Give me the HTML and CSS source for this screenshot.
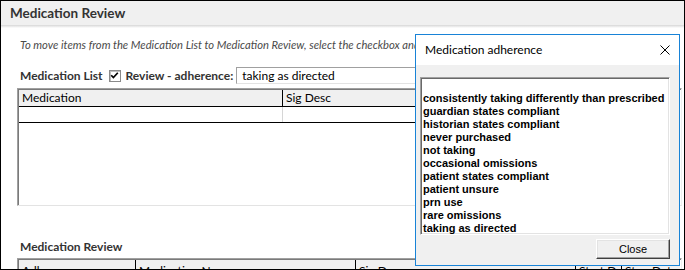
FILE: index.html
```html
<!DOCTYPE html>
<html lang="en">
<head>
<meta charset="utf-8">
<title>Medication Review</title>
<link rel="stylesheet" href="styles.css">
</head>
<body>
<div class="window">
  <header class="titlebar">
    <h1 class="title">Medication Review</h1>
  </header>
  <div class="title-shadow"></div>
  <main class="content">
    <p class="hint">To move items from the Medication List to Medication Review, select the checkbox and click the arrow to add them to the review list.</p>
    <div class="toolbar">
      <span class="label">Medication List</span>
      <span class="checkbox">
        <svg width="9" height="9" viewBox="0 0 9 9"><polyline points="1.2,4.2 3.4,6.6 7.8,1.8" fill="none" stroke="#000" stroke-width="1.7"/></svg>
      </span>
      <span class="label">Review - adherence:</span>
      <div class="input">taking as directed</div>
    </div>
    <div class="grid grid-top">
      <div class="grid-head">
        <div class="cell col-med">Medication</div>
        <div class="cell col-sig">Sig Desc</div>
        <div class="cell col-date">Start Date</div>
        <div class="cell col-date">Stop Date</div>
      </div>
      <div class="grid-row">
        <div class="cell col-med"></div>
        <div class="cell col-sig"></div>
        <div class="cell col-date"></div>
        <div class="cell col-date"></div>
      </div>
    </div>
    <h2 class="section">Medication Review</h2>
    <div class="grid grid-bottom">
      <div class="grid-head head-tall">
        <div class="cell col-adh">Adherence</div>
        <div class="cell col-name">Medication Name</div>
        <div class="cell col-sig2">Sig Desc</div>
        <div class="cell col-start">Start Date</div>
        <div class="cell col-stop">Stop Date</div>
      </div>
    </div>
  </main>

  <div class="dialog">
    <div class="dialog-title">
      <span class="dialog-caption">Medication adherence</span>
      <svg class="dialog-close" width="10" height="10" viewBox="0 0 10 10"><path d="M0.5 0.5 L9.5 9.5 M9.5 0.5 L0.5 9.5" stroke="#000" stroke-width="1" fill="none"/></svg>
    </div>
    <div class="dialog-body">
      <ul class="listbox">
        <li class="item"></li>
        <li class="item">consistently taking differently than prescribed</li>
        <li class="item">guardian states compliant</li>
        <li class="item">historian states compliant</li>
        <li class="item">never purchased</li>
        <li class="item">not taking</li>
        <li class="item">occasional omissions</li>
        <li class="item">patient states compliant</li>
        <li class="item">patient unsure</li>
        <li class="item">prn use</li>
        <li class="item">rare omissions</li>
        <li class="item">taking as directed</li>
      </ul>
      <div class="dialog-actions">
        <button class="button" type="button">Close</button>
      </div>
    </div>
  </div>
</div>
</body>
</html>
```

FILE: styles.css
```css
* { box-sizing: border-box; }

html, body {
  margin: 0;
  padding: 0;
  background: #fff;
}

.window {
  position: relative;
  width: 685px;
  height: 270px;
  border: 1px solid #000;
  background: #fff;
  overflow: hidden;
  font-family: Lato, "Open Sans", sans-serif;
  color: #333;
}

.titlebar {
  height: 24px;
  background: #f0f0f0;
  padding-left: 9px;
  display: flex;
  align-items: center;
}

.title {
  margin: 0;
  font-size: 13.5px;
  font-weight: 700;
  color: #333;
  line-height: 24px;
}

.title-shadow {
  height: 3px;
  background: linear-gradient(#d6d6d6, #fff);
}

.content {
  padding: 0 2px 0 16px;
}

.hint {
  margin: 10px 0 0 3px;
  font-size: 11.2px;
  font-style: italic;
  line-height: 14px;
  color: #4a4a4a;
  white-space: nowrap;
  overflow: hidden;
}

.toolbar {
  margin-top: 15px;
  height: 17px;
  display: flex;
  align-items: center;
}

.label {
  font-size: 12px;
  font-weight: 700;
  color: #333;
  white-space: nowrap;
}

.toolbar .label:first-child {
  margin-left: 3px;
}

.checkbox {
  width: 12px;
  height: 12px;
  margin: 0 5px 0 6px;
  background: #fff;
  border: 1px solid #8a8a8a;
  box-shadow: inset 1px 1px #bdbdbd;
  display: flex;
  align-items: center;
  justify-content: center;
}

.input {
  flex: 0 0 440px;
  height: 17px;
  margin-left: 3px;
  padding-left: 5px;
  border: 1px solid;
  border-color: #a0a0a0 #e3e3e3 #e3e3e3 #a0a0a0;
  font-size: 12px;
  line-height: 15px;
  color: #000;
  white-space: nowrap;
}

.grid {
  border: 1px solid;
  border-color: #a0a0a0 #f0f0f0 #e3e3e3 #a0a0a0;
  box-shadow: inset 1px 1px #7a7a7a, inset -1px -1px #fff;
  padding: 1px;
  overflow: hidden;
}

.grid-top {
  margin-top: 4px;
  height: 118px;
}

.grid-head,
.grid-row {
  display: flex;
  white-space: nowrap;
}

.grid-head {
  height: 17px;
  background: #f0f0f0;
  border-bottom: 1px solid #000;
}

.grid-row {
  height: 16px;
  border-bottom: 1px solid #000;
}

.cell {
  flex: none;
  padding-left: 3px;
  font-size: 12px;
  line-height: 16px;
  color: #000;
  overflow: hidden;
}

.grid-head .cell {
  border-right: 1px solid #000;
}

.grid-row .cell {
  border-right: 1px solid #d6d6d6;
}

.col-med { width: 264px; }
.col-sig { width: 220px; }
.col-date { width: 70px; }

.section {
  margin: 33px 0 0 3px;
  font-size: 12px;
  font-weight: 700;
  line-height: 16px;
  color: #333;
}

.grid-bottom {
  margin-top: 3px;
  height: 40px;
}

.head-tall {
  height: 22px;
}

.head-tall .cell {
  line-height: 21px;
}

.col-adh { width: 117px; }
.col-name { width: 220px; }
.col-sig2 { width: 220px; }
.col-start { width: 46px; }
.col-stop { width: 60px; }

/* Dialog overlay */
.dialog {
  position: absolute;
  left: 414px;
  top: 33px;
  width: 265px;
  height: 232px;
  border: 1px solid #1883d7;
  background: #f0f0f0;
  display: flex;
  flex-direction: column;
}

.dialog-title {
  height: 30px;
  background: #fff;
  display: flex;
  align-items: center;
  justify-content: space-between;
  padding: 0 9px 1px 9px;
}

.dialog-caption {
  font-size: 12px;
  color: #000;
}

.dialog-body {
  flex: 1;
  padding: 12px 9px 0 4px;
  display: flex;
  flex-direction: column;
}

.listbox {
  margin: 0;
  padding: 1px 0 0 2px;
  list-style: none;
  height: 158px;
  background: #fff;
  border: 1px solid;
  border-color: #a0a0a0 #fff #fff #a0a0a0;
  box-shadow: inset 1px 1px #696969, inset -1px -1px #e3e3e3;
  overflow: hidden;
}

.item {
  height: 13px;
  font-family: "Liberation Sans", Arial, sans-serif;
  font-size: 11px;
  font-weight: 700;
  line-height: 13px;
  color: #000;
  white-space: nowrap;
}

.dialog-actions {
  margin-top: 4px;
  display: flex;
  justify-content: flex-end;
}

.button {
  width: 74px;
  height: 20px;
  margin: 0;
  padding: 0;
  background: #f0f0f0;
  border: 1px solid;
  border-color: #fff #3f3f3f #3f3f3f #fff;
  box-shadow: inset -1px -1px #a0a0a0, inset 1px 1px #e3e3e3;
  font-family: "Liberation Sans", Arial, sans-serif;
  font-size: 11px;
  color: #000;
}
```
